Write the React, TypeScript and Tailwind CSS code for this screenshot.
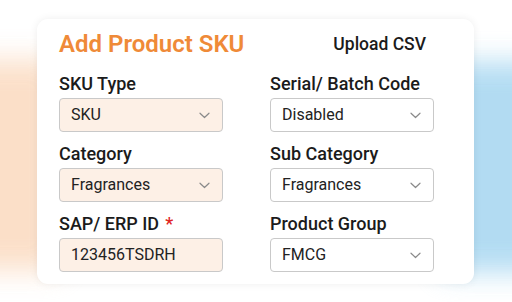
import React from 'react';

function Chevron() {
  return (
    <svg width="11" height="7" viewBox="0 0 11 7" fill="none" className="shrink-0">
      <path d="M1 1.2l4.5 4.3L10 1.2" stroke="#8a8a8a" strokeWidth="1.2" strokeLinecap="round" strokeLinejoin="round" />
    </svg>
  );
}

type FieldProps = {
  label: string;
  value: string;
  tinted?: boolean;
  select?: boolean;
  required?: boolean;
};

function Field({ label, value, tinted, select = true, required }: FieldProps) {
  return (
    <div className="flex flex-col gap-1 w-[164px]">
      <div className="text-[18px] leading-5 font-medium text-[#1b1b1b] whitespace-nowrap">
        {label}
        {required && <span className="text-[#e02424] ml-1.5">*</span>}
      </div>
      <div
        className={`h-[34px] rounded-[4px] border border-[#c9c9c9] flex items-center justify-between pl-[11px] pr-[12px] ${
          tinted ? 'bg-[#fdf0e6]' : 'bg-white'
        }`}
      >
        <span className="text-[16px] text-[#222] leading-5">{value}</span>
        {select && <Chevron />}
      </div>
    </div>
  );
}

export default function App() {
  return (
    <div
      className="relative w-[512px] h-[302px] overflow-hidden bg-white"
      style={{ fontFamily: 'Roboto, "Noto Sans", sans-serif' }}
    >
      <div className="absolute left-[-40px] top-[60px] w-[100px] h-[210px] bg-[#fbdcc3] blur-[14px] opacity-90" />
      <div className="absolute right-[-40px] top-[62px] w-[110px] h-[210px] bg-[#aad8f1] blur-[14px] opacity-90" />
      <div className="relative ml-[37px] mt-[19px] w-[437px] h-[265px] rounded-[11px] bg-white shadow-[0_0_8px_rgba(0,0,0,0.07)] pl-[22px] pr-[40px] pt-[11px]">
        <div className="flex items-start justify-between">
          <h1 className="text-[24px] leading-7 font-semibold text-[#ef8a38]">Add Product SKU</h1>
          <div className="text-[17.5px] leading-6 font-medium text-[#1b1b1b] pt-[2px] pr-[8px]">Upload CSV</div>
        </div>
        <div className="grid grid-cols-[164px_164px] gap-x-[47px] gap-y-3 mt-[16px]">
          <Field label="SKU Type" value="SKU" tinted />
          <Field label="Serial/ Batch Code" value="Disabled" />
          <Field label="Category" value="Fragrances" tinted />
          <Field label="Sub Category" value="Fragrances" />
          <Field label="SAP/ ERP ID" value="123456TSDRH" tinted select={false} required />
          <Field label="Product Group" value="FMCG" />
        </div>
      </div>
    </div>
  );
}
